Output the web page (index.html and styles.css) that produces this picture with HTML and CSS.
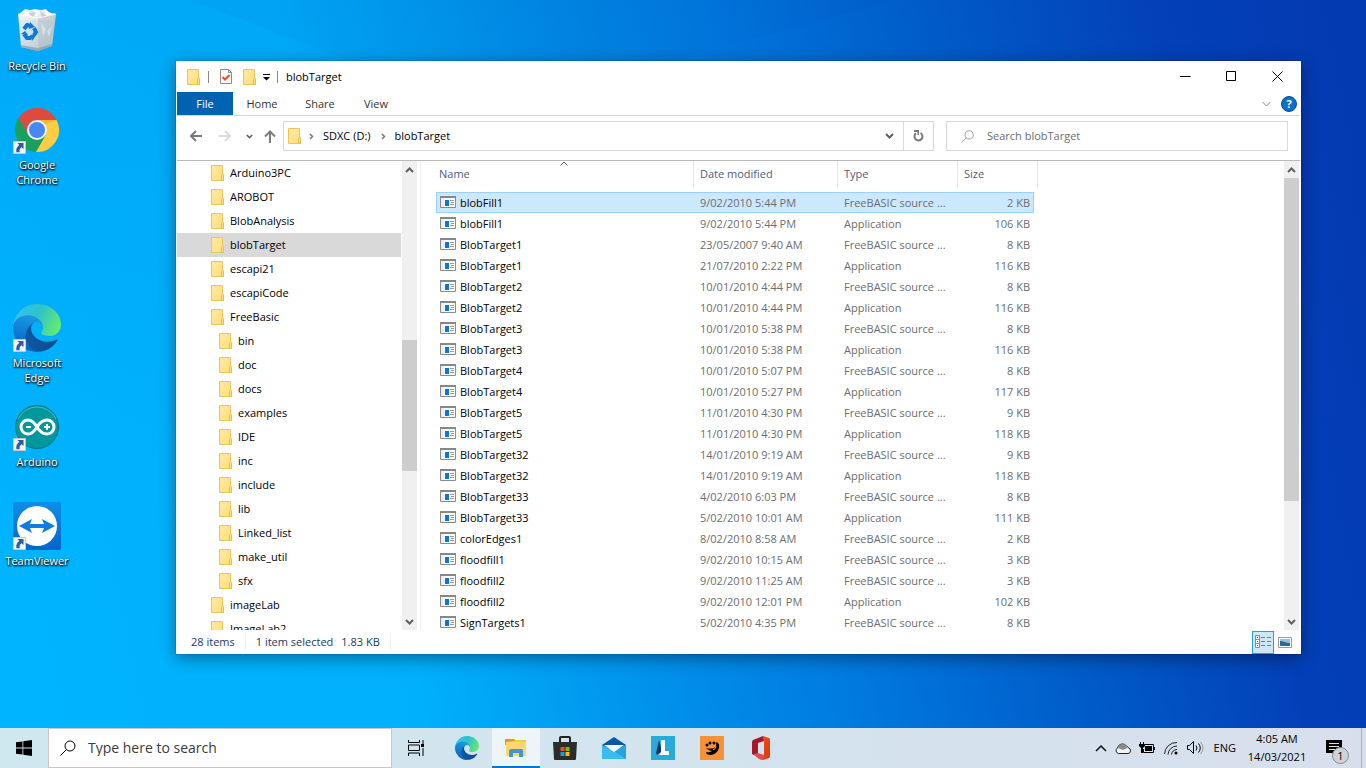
FILE: index.html
```html
<!DOCTYPE html>
<html lang="en">

<head>
    <meta charset="UTF-8">
    <meta name="viewport" content="width=device-width, initial-scale=1.0">
    <title>blobTarget</title>
    <link rel="stylesheet" href="styles.css">
</head>

<body>
    <!-- Shared icons -->
    <svg class="sprite" aria-hidden="true">
        <defs>
            <linearGradient id="folderFill" x1="0" y1="0" x2="1" y2="1">
                <stop offset="0" stop-color="#ffe9a2" />
                <stop offset="1" stop-color="#ffdf7e" />
            </linearGradient>
            <linearGradient id="edgeDark" x1="0" y1="0" x2="1" y2="0">
                <stop offset="0" stop-color="#0c59a4" />
                <stop offset="1" stop-color="#114a8b" />
            </linearGradient>
            <linearGradient id="edgeMid" x1="0.6" y1="0" x2="0.3" y2="1">
                <stop offset="0" stop-color="#1b9de2" />
                <stop offset="0.5" stop-color="#0f7fd8" />
                <stop offset="1" stop-color="#0b5cb0" />
            </linearGradient>
            <linearGradient id="edgeTop" x1="0" y1="0.3" x2="1" y2="0.6">
                <stop offset="0" stop-color="#35c1f1" />
                <stop offset="0.5" stop-color="#2fc3c9" />
                <stop offset="1" stop-color="#66eb6e" />
            </linearGradient>
            <linearGradient id="tvFill" x1="0" y1="0" x2="0" y2="1">
                <stop offset="0" stop-color="#0e8ee9" />
                <stop offset="1" stop-color="#0565ca" />
            </linearGradient>
            <linearGradient id="binFill" x1="0" y1="0" x2="1" y2="1">
                <stop offset="0" stop-color="#f4f6f8" />
                <stop offset="1" stop-color="#c3c8cd" />
            </linearGradient>
            <linearGradient id="officeFill" x1="0" y1="0" x2="1" y2="1">
                <stop offset="0" stop-color="#f0502a" />
                <stop offset="1" stop-color="#d93a06" />
            </linearGradient>
        </defs>
        <symbol id="folder" viewBox="0 0 14 16">
            <path d="M.5.5h11v9h1v6H.5z" fill="url(#folderFill)" stroke="#ecc757" />
            <path d="M10.5 15.5v-5l1-1 1 1v5z" fill="#ffe08a" stroke="#e6bd48" />
        </symbol>
        <symbol id="app" viewBox="0 0 16 12">
            <path d="M.5.5h15v11H.5z" fill="#eee" stroke="#8a8a8a" />
            <path d="M0 0h16v2H0z" fill="#85888b" />
            <path d="M4 2h11v9H4z" fill="#fff" />
            <path d="M5 4h4v6H5z" fill="#0a78d7" />
            <path d="M10 4.500h4M11 6.500h3M10 8.500h4" stroke="#9a9a9a" />
        </symbol>
        <symbol id="edge" viewBox="0 0 256 256">
            <g transform="translate(-4.63 -4.92)">
                <path fill="url(#edgeDark)" d="M235.680 195.460a93.730 93.730 0 01-10.540 4.710 101.870 101.870 0 01-35.900 6.460c-47.320 0-88.540-32.550-88.540-74.320A31.480 31.480 0 01117.130 105c-42.800 1.800-53.800 46.400-53.800 72.530 0 73.880 68.090 81.370 82.760 81.370 7.910 0 19.840-2.300 27-4.560l1.310-.44a128.340 128.340 0 0066.600-52.800 4 4 0 00-5.320-5.640z" />
                <path fill="url(#edgeMid)" d="M110.340 246.340A79.200 79.200 0 0187.600 225a80.720 80.720 0 0129.530-120c3.120-1.470 8.450-4.130 15.540-4a32.350 32.350 0 0125.690 13 31.880 31.880 0 016.360 18.660c0-.21 24.460-79.600-80-79.600-43.900 0-80 41.660-80 78.210a130.150 130.150 0 0012.110 56 128 128 0 00156.380 67.110 75.550 75.550 0 01-62.780-8z" />
                <path fill="url(#edgeTop)" d="M156.940 153.780c-.81 1.050-3.300 2.500-3.300 5.660 0 2.610 1.700 5.120 4.720 7.230 14.380 10 41.490 8.680 41.560 8.680a59.560 59.560 0 0030.270-8.350 61.380 61.380 0 0030.430-52.880c.26-22.410-8-37.310-11.340-43.910-21.190-41.450-66.930-65.290-116.670-65.290a128 128 0 00-128 126.200c.48-36.540 36.800-66.050 80-66.050 3.500 0 23.460.34 42 10.070 16.340 8.580 24.900 18.940 30.850 29.210 6.180 10.670 7.280 24.150 7.280 29.520s-2.740 13.330-7.800 19.910z" />
            </g>
        </symbol>
        <symbol id="shortcut" viewBox="0 0 13 13">
            <path d="M.5.5h12v12H.5z" fill="#f3f3f3" stroke="#c9c9c9" />
            <path d="M4.500 2h6v6L8.500 6.200C6.700 7.500 6.300 9 6.700 11.200H3.400C2.800 8 4 5.500 6.300 4z" fill="#2c5d9e" />
        </symbol>
        <symbol id="up" viewBox="0 0 9 6">
            <path d="M1 5l3.500-3.500L8 5" fill="none" stroke="#606060" stroke-width="2" />
        </symbol>
        <symbol id="down" viewBox="0 0 9 6">
            <path d="M1 1l3.500 3.500L8 1" fill="none" stroke="#606060" stroke-width="2" />
        </symbol>
        <symbol id="magnifier" viewBox="0 0 16 16">
            <circle cx="10" cy="6" r="5" fill="none" stroke="currentColor" />
            <path d="M6.500 9.500L.5 15.500" stroke="currentColor" />
        </symbol>
    </svg>

    <main class="desktop">
        <svg class="rays" viewBox="0 0 1366 728" preserveAspectRatio="none" aria-hidden="true">
            <path d="M190 0L480 110L900 0z" fill="#003f9e" opacity=".03" />
        </svg>

        <nav class="shortcuts" aria-label="Desktop">
            <a class="shortcut" href="#">
                <svg class="shortcut-icon" viewBox="0 0 48 48">
                    <path d="M6 7l6-5 5 1 5-1 6 1 5-1 4 5 5-1-2 7H7z" fill="#e9ecef" />
                    <path d="M12 3l5 4-6 3zM21 2l6 3-4 5zM32 3l1 6 7-2z" fill="#fff" />
                    <path d="M15 6l5 4 3-5zM27 4l2 7 5-2z" fill="#c9ced3" />
                    <path d="M5 7l20 4 18-4-4 32-14 5-17-4z" fill="url(#binFill)" opacity=".93" />
                    <path d="M25 11l18-4-4 32-14 5z" fill="#aab1b8" opacity=".35" />
                    <path d="M8 38l17 3 14-4v2l-14 5-17-4z" fill="#8b9299" opacity=".6" />
                    <path d="M5 7l20 4 18-4" fill="none" stroke="#fff" opacity=".7" />
                    <path d="M28 16l5 6-3 8zM34 24l5-5-3 11zM10 14l6 2-4 4z" fill="#fff" opacity=".4" />
                    <g fill="none" stroke="#0d79d3" stroke-width="4">
                        <path d="M11 22l3-4 4 1M21 21l2 4-2 3M18 31h-4l-3-4" />
                    </g>
                    <path d="M17 15l5 5-6 2zM24 27l-7 1 2 6zM8 27l4-3 3 4z" fill="#0d79d3" />
                </svg>
                <span class="shortcut-label">Recycle Bin</span>
            </a>
            <a class="shortcut" href="#">
                <svg class="shortcut-icon" viewBox="0 0 48 48">
                    <path d="M5.550 12.020A22 22 0 0143.600 14H24l-8.660 15z" fill="#dd4b3e" />
                    <path d="M43.600 14A22 22 0 0122.850 45.970L32.660 29 24 14z" fill="#ffcd42" />
                    <path d="M22.850 45.970A22 22 0 015.550 12.020L15.340 29h17.320z" fill="#1a9f5c" />
                    <path d="M24 14h19.600l-12 5z" fill="#d9a02b" opacity=".4" />
                    <circle cx="24" cy="24" r="10" fill="#f4f4f4" />
                    <circle cx="24" cy="24" r="8" fill="#4688f4" />
                    <use href="#shortcut" x="0" y="35" width="13" height="13" />
                </svg>
                <span class="shortcut-label">Google Chrome</span>
            </a>
            <a class="shortcut shortcut-lower" href="#">
                <svg class="shortcut-icon" viewBox="0 0 48 48">
                    <use href="#edge" width="48" height="48" />
                    <use href="#shortcut" x="0" y="35" width="13" height="13" />
                </svg>
                <span class="shortcut-label">Microsoft Edge</span>
            </a>
            <a class="shortcut" href="#">
                <svg class="shortcut-icon" viewBox="0 0 48 48">
                    <circle cx="24" cy="24" r="21.500" fill="#02979c" stroke="#0b7478" />
                    <path d="M5 16a21 21 0 0138 0" fill="none" stroke="#7fcfd0" opacity=".6" />
                    <path d="M24 24c-3-5-6-7-9-7a7 7 0 000 14c3 0 6-2 9-7s6-7 10-7a7 7 0 010 14c-4 0-7-2-10-7z" fill="none" stroke="#fff" stroke-width="3" />
                    <path d="M13 24h5M31 24h6M34 21v6" stroke="#fff" stroke-width="2" />
                    <use href="#shortcut" x="0" y="35" width="13" height="13" />
                </svg>
                <span class="shortcut-label">Arduino</span>
            </a>
            <a class="shortcut" href="#">
                <svg class="shortcut-icon" viewBox="0 0 48 48">
                    <rect width="48" height="48" rx="2" fill="url(#tvFill)" />
                    <circle cx="24" cy="24" r="20" fill="#fff" />
                    <path d="M6 24l13-7-2 5h14l-2-5 13 7-13 7 2-5H17l2 5z" fill="#0f7de0" />
                    <use href="#shortcut" x="0" y="35" width="13" height="13" />
                </svg>
                <span class="shortcut-label">TeamViewer</span>
            </a>
        </nav>

        <section class="window">
            <header class="titlebar">
                <svg class="folder"><use href="#folder" /></svg>
                <span class="bar"></span>
                <button class="quick" aria-label="Properties">
                    <svg width="12" height="15" viewBox="0 0 12 15">
                        <path d="M.5.5h8l3 3v11H.5z" fill="#f8f8f8" stroke="#8b8b8b" />
                        <path d="M8.500.5v3h3" fill="none" stroke="#8b8b8b" />
                        <path d="M2.500 8l2.500 2.500L9.500 6" fill="none" stroke="#e8501d" stroke-width="2" />
                    </svg>
                </button>
                <button class="quick" aria-label="New folder">
                    <svg class="folder"><use href="#folder" /></svg>
                </button>
                <button class="quick-menu" aria-label="Customize Quick Access Toolbar">
                    <svg width="7" height="7" viewBox="0 0 7 7">
                        <path d="M0 0h7v1H0zM0 3h7L3.500 6.500z" />
                    </svg>
                </button>
                <span class="bar"></span>
                <h1>blobTarget</h1>
                <div class="window-buttons">
                    <button aria-label="Minimize">
                        <svg width="11" height="11" viewBox="0 0 11 11"><path d="M0 5.500h10.500" stroke="#000" /></svg>
                    </button>
                    <button aria-label="Maximize">
                        <svg width="11" height="11" viewBox="0 0 11 11"><path d="M.5.5h9v9h-9z" fill="none" stroke="#000" /></svg>
                    </button>
                    <button aria-label="Close">
                        <svg width="11" height="11" viewBox="0 0 11 11"><path d="M.5.5l10 10M10.500.5l-10 10" stroke="#000" /></svg>
                    </button>
                </div>
            </header>

            <div class="ribbon">
                <button class="tab tab-file">File</button>
                <button class="tab">Home</button>
                <button class="tab">Share</button>
                <button class="tab">View</button>
                <div class="ribbon-end">
                    <button aria-label="Expand the Ribbon">
                        <svg width="9" height="6" viewBox="0 0 9 6"><path d="M.5 1l4 4 4-4" fill="none" stroke="#8a8a8a" /></svg>
                    </button>
                    <button class="help" aria-label="Help">?</button>
                </div>
            </div>

            <div class="navbar">
                <button class="nav-back" aria-label="Back">
                    <svg width="12" height="12" viewBox="0 0 12 12"><path d="M6 1L1 6l5 5M1 6h11" fill="none" stroke="#7b7b7b" stroke-width="2" /></svg>
                </button>
                <button class="nav-forward" aria-label="Forward">
                    <svg width="12" height="12" viewBox="0 0 12 12"><path d="M6 1l5 5-5 5M11 6H0" fill="none" stroke="#dcdcdc" stroke-width="2" /></svg>
                </button>
                <button class="nav-recent" aria-label="Recent locations">
                    <svg width="7" height="5"><use href="#down" /></svg>
                </button>
                <button class="nav-up" aria-label="Up">
                    <svg width="12" height="13" viewBox="0 0 12 13"><path d="M1 6.500l5-5 5 5M6 1.500V13" fill="none" stroke="#7b7b7b" stroke-width="2" /></svg>
                </button>
                <div class="address">
                    <svg class="folder"><use href="#folder" /></svg>
                    <svg class="crumb-arrow" viewBox="0 0 5 7"><path d="M1 1l2.500 2.500L1 6" fill="none" stroke="#777" stroke-width="1.500" /></svg>
                    <a class="crumb" href="#">SDXC (D:)</a>
                    <svg class="crumb-arrow" viewBox="0 0 5 7"><path d="M1 1l2.500 2.500L1 6" fill="none" stroke="#777" stroke-width="1.500" /></svg>
                    <a class="crumb" href="#">blobTarget</a>
                    <button class="address-drop" aria-label="Previous locations">
                        <svg width="9" height="6"><use href="#down" /></svg>
                    </button>
                    <button class="refresh" aria-label="Refresh">
                        <svg width="11" height="12" viewBox="0 0 11 12">
                            <path d="M7.500 3a4 4 0 11-4.500.3" fill="none" stroke="#777" stroke-width="2" />
                            <path d="M1 0h5v5H4.500V2H1z" fill="#777" />
                        </svg>
                    </button>
                </div>
                <label class="search">
                    <svg width="13" height="13"><use href="#magnifier" /></svg>
                    <input type="search" placeholder="Search blobTarget" aria-label="Search blobTarget">
                </label>
            </div>

            <div class="content">
                <ul class="tree" id="tree"></ul>
                <div class="scrollbar tree-scroll">
                    <svg width="9" height="6"><use href="#up" /></svg>
                    <div class="track"><div class="thumb"></div></div>
                    <svg width="9" height="6"><use href="#down" /></svg>
                </div>

                <div class="files">
                    <table>
                        <colgroup>
                            <col class="col-name">
                            <col class="col-date">
                            <col class="col-type">
                            <col class="col-size">
                            <col class="col-end">
                        </colgroup>
                        <thead>
                            <tr>
                                <th><span>Name</span><svg class="sort" viewBox="0 0 8 5"><path d="M.5 4.500L4 1l3.500 3.500" fill="none" stroke="#5a5a5a" /></svg></th>
                                <th><span>Date modified</span></th>
                                <th><span>Type</span></th>
                                <th colspan="2"><span>Size</span></th>
                            </tr>
                        </thead>
                        <tbody id="fileRows"></tbody>
                    </table>
                </div>
                <div class="scrollbar file-scroll">
                    <svg width="9" height="6"><use href="#up" /></svg>
                    <div class="track"><div class="thumb"></div></div>
                    <svg width="9" height="6"><use href="#down" /></svg>
                </div>
            </div>

            <footer class="status">
                <span class="status-count">28 items</span>
                <span>1 item selected</span>
                <span class="status-size">1.83 KB</span>
                <div class="views">
                    <button class="view view-on" aria-label="Details">
                        <svg width="16" height="14" viewBox="0 0 16 14">
                            <path d="M.5.5h4v12h-4zM.5 4.500h4M.5 8.500h4" fill="#fff" stroke="#8c8c8c" />
                            <path d="M2 2h1v1H2zM2 6h1v1H2z" fill="#555" />
                            <path d="M2 10h1v1H2z" fill="#d22" />
                            <path d="M6 2.500h4M12 2.500h4M6 6.500h4M12 6.500h4M6 10.500h4M12 10.500h4" stroke="#7a7a7a" />
                        </svg>
                    </button>
                    <button class="view" aria-label="Large icons">
                        <svg width="14" height="11" viewBox="0 0 14 11">
                            <path d="M.5.5h13v10H.5z" fill="#fff" stroke="#9a9a9a" />
                            <path d="M2 2h10v7H2z" fill="#8fc1f2" />
                            <path d="M2 4c3 0 6 2 10 2v1H2z" fill="#2c6e63" />
                            <path d="M2 7h10v2H2z" fill="#2a66c0" />
                        </svg>
                    </button>
                </div>
            </footer>
        </section>
    </main>

    <footer class="taskbar">
        <button class="start" aria-label="Start">
            <svg width="16" height="16" viewBox="0 0 16 16">
                <path d="M0 2.300L6.500 1.400v6.200H0zM7.300 1.300L16 0v7.600H7.300zM0 8.400h6.500v6.200L0 13.700zM7.300 8.400H16V16l-8.700-1.300z" />
            </svg>
        </button>
        <label class="task-search">
            <svg width="16" height="16"><use href="#magnifier" /></svg>
            <input type="search" placeholder="Type here to search" aria-label="Type here to search">
        </label>
        <button class="task-view" aria-label="Task View">
            <svg width="16" height="16" viewBox="0 0 16 16">
                <path d="M.5 0v2.500h11V0M.5 16v-3h11v3M.5 5h11v5.500H.5zM15 0v4M15 8v8" fill="none" stroke="#000" />
                <path d="M13 4h3v3h-3z" />
            </svg>
        </button>
        <button class="task" aria-label="Microsoft Edge">
            <svg width="24" height="24"><use href="#edge" /></svg>
        </button>
        <button class="task task-active" aria-label="File Explorer">
            <svg width="22" height="20" viewBox="0 0 22 20">
                <path d="M0 1h9l2 2v4H0z" fill="#dc9f11" />
                <path d="M1 4l10-1V2h10v16H1z" fill="#ffd869" />
                <path d="M11 2h10v2H10z" fill="#f7c948" />
                <path d="M4 19v-7l2-1h11l1 1v7h-4v-4H8v4z" fill="#3e96da" />
            </svg>
        </button>
        <button class="task" aria-label="Microsoft Store">
            <svg width="24" height="24" viewBox="0 0 24 24">
                <path d="M7 7V2q0-1 1-1h8q1 0 1 1v5" fill="none" stroke="#222" stroke-width="2" />
                <path d="M0 6h24l-1 17q0 1-1 1H2q-1 0-1-1z" fill="#2d2c2b" />
                <path d="M7.500 11h4v4h-4z" fill="#f25022" />
                <path d="M12.500 11h4v4h-4z" fill="#7fba00" />
                <path d="M7.500 16h4v4h-4z" fill="#00a4ef" />
                <path d="M12.500 16h4v4h-4z" fill="#ffb900" />
            </svg>
        </button>
        <button class="task" aria-label="Mail">
            <svg width="24" height="24" viewBox="0 0 24 24">
                <path d="M0 9l12-8 12 8v4H0z" fill="#0358a7" />
                <path d="M0 9l12 6 12-6v14H0z" fill="#38bdf0" />
                <path d="M24 9v14L12 15z" fill="#20a4ea" />
                <path d="M2 9h20l-10 7z" fill="#f7f7f7" />
            </svg>
        </button>
        <button class="task" aria-label="L">
            <svg width="24" height="24" viewBox="0 0 24 24">
                <path d="M0 0h24v24H0z" fill="#27acd9" />
                <path d="M8 4L5 17l1 2 5-4z" fill="#0b3560" />
                <path d="M10 4h4v11h4v4H7q3-1 3-4z" fill="#fff" />
            </svg>
        </button>
        <button class="task" aria-label="Paint">
            <svg width="24" height="24" viewBox="0 0 24 24">
                <path d="M0 0h24v24H0z" fill="#f59235" />
                <circle cx="7" cy="9" r="1.500" />
                <circle cx="10" cy="7" r="1.500" />
                <circle cx="14" cy="7" r="1.500" />
                <path d="M16 6q4 1 3 6-2 6-8 7-5 0-5-3 3 1 6-1-3 0-6-3 4 1 8 0 3-1 2-6z" />
                <path d="M13 14q3-1 3-4" fill="none" stroke="#f59235" />
            </svg>
        </button>
        <button class="task" aria-label="Office">
            <svg width="20" height="24" viewBox="0 0 20 24">
                <path d="M12 0l6 2q1 0 1 2v16q0 2-1 2l-6 2-5-3 6-1V5z" fill="url(#officeFill)" />
                <path d="M12 0l1 5-6 2v10l-4 2-2-1V6q0-1 1-2z" fill="#a5172a" />
                <path d="M3 19l4-2 6 2v4l-1 1q-2 0-4-1z" fill="#e8474e" />
            </svg>
        </button>

        <div class="tray">
            <button aria-label="Show hidden icons">
                <svg width="12" height="8" viewBox="0 0 12 8"><path d="M1 7l5-5 5 5" fill="none" stroke="#111" stroke-width="1.500" /></svg>
            </button>
            <button aria-label="OneDrive">
                <svg width="16" height="12" viewBox="0 0 16 12">
                    <path d="M3.500 11.500a3 3 0 01-1-5.500A5 5 0 0111.500 4a3.500 3.500 0 012 2 2.800 2.800 0 01-.5 5.500z" fill="#f2f2f2" stroke="#222" />
                    <path d="M3 6a4.500 4.500 0 018.500-1.500L12 6 8 8z" fill="#8a8a8a" />
                </svg>
            </button>
            <button aria-label="Battery">
                <svg width="16" height="12" viewBox="0 0 16 12">
                    <path d="M5 2.500h9.500v8H4.500V7M15.500 5v3M1.500 0v2M4.500 0v2" fill="none" stroke="#000" />
                    <path d="M0 2h6v2L4 6v5H2V6L0 4zM6 4h7v5H6z" />
                </svg>
            </button>
            <button aria-label="Network">
                <svg width="16" height="14" viewBox="-1 0 16 14">
                    <path d="M.5 13A12 12 0 0113 1.500M4 13.500A9 9 0 0113 5M7.500 13.500A6 6 0 0113 8.500" fill="none" stroke="#222" />
                    <circle cx="12" cy="12" r="1.500" />
                </svg>
            </button>
            <button aria-label="Volume">
                <svg width="17" height="14" viewBox="0 0 17 14">
                    <path d="M.5 4.500h2l4-4v12l-4-4h-2z" fill="none" stroke="#000" />
                    <path d="M9 4.500q2 2.500 0 5M11.500 2.500q3.500 4.500 0 9" fill="none" stroke="#000" />
                    <path d="M13.500 1q5 6 0 12" fill="none" stroke="#9a9a9a" />
                </svg>
            </button>
            <button class="language">ENG</button>
            <button class="clock"><span>4:05 AM</span><span>14/03/2021</span></button>
            <button class="notifications" aria-label="Notifications, 1 new">
                <svg width="24" height="24" viewBox="0 0 24 24">
                    <path d="M0 0h16v13H9v3l-3-3H0z" />
                    <path d="M3 3.500h10M3 6.500h10M3 9.500h7" stroke="#d8dfec" />
                </svg>
                <span class="badge">1</span>
            </button>
            <button class="show-desktop" aria-label="Show desktop"></button>
        </div>
    </footer>

    <script>
        const tree = document.getElementById('tree');
        const fileRows = document.getElementById('fileRows');

        const currentFolder = 'blobTarget';
        const folders = [
            'Arduino3PC', 'AROBOT', 'BlobAnalysis', 'blobTarget', 'escapi21', 'escapiCode',
            {
                name: 'FreeBasic',
                children: ['bin', 'doc', 'docs', 'examples', 'IDE', 'inc', 'include', 'lib', 'Linked_list', 'make_util', 'sfx']
            },
            'imageLab', 'ImageLab2'
        ];

        const source = 'FreeBASIC source ...';
        const app = 'Application';
        const files = [
            ['blobFill1', '9/02/2010 5:44 PM', source, '2 KB'],
            ['blobFill1', '9/02/2010 5:44 PM', app, '106 KB'],
            ['BlobTarget1', '23/05/2007 9:40 AM', source, '8 KB'],
            ['BlobTarget1', '21/07/2010 2:22 PM', app, '116 KB'],
            ['BlobTarget2', '10/01/2010 4:44 PM', source, '8 KB'],
            ['BlobTarget2', '10/01/2010 4:44 PM', app, '116 KB'],
            ['BlobTarget3', '10/01/2010 5:38 PM', source, '8 KB'],
            ['BlobTarget3', '10/01/2010 5:38 PM', app, '116 KB'],
            ['BlobTarget4', '10/01/2010 5:07 PM', source, '8 KB'],
            ['BlobTarget4', '10/01/2010 5:27 PM', app, '117 KB'],
            ['BlobTarget5', '11/01/2010 4:30 PM', source, '9 KB'],
            ['BlobTarget5', '11/01/2010 4:30 PM', app, '118 KB'],
            ['BlobTarget32', '14/01/2010 9:19 AM', source, '9 KB'],
            ['BlobTarget32', '14/01/2010 9:19 AM', app, '118 KB'],
            ['BlobTarget33', '4/02/2010 6:03 PM', source, '8 KB'],
            ['BlobTarget33', '5/02/2010 10:01 AM', app, '111 KB'],
            ['colorEdges1', '8/02/2010 8:58 AM', source, '2 KB'],
            ['floodfill1', '9/02/2010 10:15 AM', source, '3 KB'],
            ['floodfill2', '9/02/2010 11:25 AM', source, '3 KB'],
            ['floodfill2', '9/02/2010 12:01 PM', app, '102 KB'],
            ['SignTargets1', '5/02/2010 4:35 PM', source, '8 KB']
        ];

        function folderItem(folder) {
            const name = folder.name || folder;
            const children = folder.children ? `<ul>${folder.children.map(folderItem).join('')}</ul>` : '';
            const current = name === currentFolder ? ' class="current"' : '';
            return `<li><a${current} href="#"><svg class="folder"><use href="#folder" /></svg>${name}</a>${children}</li>`;
        }

        function fileRow([name, date, type, size], index) {
            const selected = index === 0 ? ' class="selected"' : '';
            return `<tr${selected}><td><svg class="app"><use href="#app" /></svg>${name}</td><td>${date}</td><td>${type}</td><td>${size}</td></tr>`;
        }

        tree.innerHTML = folders.map(folderItem).join('');
        fileRows.innerHTML = files.map(fileRow).join('');
    </script>
</body>

</html>
```
FILE: styles.css
```css
:root {
    /* Colors */
    --accent: #0063b1;
    --text: #000000;
    --text-muted: #6d6d6d;
    --text-header: #4c607a;
    --text-status: #1e395b;
    --line: #d9d9d9;
    --selected: #cce8ff;
    --selected-border: #99d1ff;
    --scroll-track: #f0f0f0;
    --scroll-thumb: #cdcdcd;

    /* Sizes */
    --taskbar-height: 40px;
    --scrollbar-width: 15px;
    --font-size: 11px;
    --font-size-search: 14px;
}

* {
    box-sizing: border-box;
}

body {
    margin: 0;
    height: 100vh;
    display: flex;
    flex-direction: column;
    overflow: hidden;
    font-family: "Open Sans", "Noto Sans", sans-serif;
    font-size: var(--font-size);
    line-height: 16px;
    color: var(--text);
}

button {
    display: flex;
    align-items: center;
    justify-content: center;
    margin: 0;
    padding: 0;
    border: 0;
    background: none;
    font: inherit;
    color: inherit;
}

a {
    color: inherit;
    text-decoration: none;
}

input {
    flex: 1;
    min-width: 0;
    padding: 0;
    border: 0;
    outline: none;
    background: none;
    font: inherit;
}

svg {
    flex: none;
    display: block;
}

.sprite {
    position: absolute;
    width: 0;
    height: 0;
}

/* Desktop */
.desktop {
    position: relative;
    flex: 1;
    min-height: 0;
    background:
        linear-gradient(180deg, rgba(0, 70, 180, 0.08), transparent 75%),
        linear-gradient(78deg, #00b4ff 0%, #00b0fb 28%, #008de9 46%, #0079de 57%, #005fcb 70%, #0340b8 86%, #0338b0 100%);
}

.rays {
    position: absolute;
    inset: 0;
    width: 100%;
    height: 100%;
}

.shortcuts {
    position: relative;
    display: flex;
    flex-direction: column;
    width: 74px;
}

.shortcut {
    display: flex;
    flex-direction: column;
    align-items: center;
    gap: 3px;
    height: 99px;
    padding-top: 7px;
}

/* leaves one free slot above */
.shortcut-lower {
    margin-top: 99px;
}

.shortcut-icon {
    width: 48px;
    height: 48px;
}

.shortcut-label {
    line-height: 15px;
    max-width: 72px;
    text-align: center;
    color: #fff;
    text-shadow: 1px 1px 2px #000, 0 1px 2px #000;
}

/* Window */
.window {
    position: absolute;
    top: 61px;
    right: 65px;
    bottom: 74px;
    left: 176px;
    display: flex;
    flex-direction: column;
    padding: 0 1px;
    background: #fff;
    box-shadow: 0 0 1px rgba(0, 0, 0, 0.5), 0 4px 16px rgba(0, 0, 0, 0.4);
}

.folder {
    width: 14px;
    height: 16px;
}

.titlebar {
    display: flex;
    align-items: center;
    height: 31px;
    padding-left: 10px;
}

.titlebar h1 {
    margin: 0 0 0 8px;
    font-size: var(--font-size);
    font-weight: normal;
}

.bar {
    width: 1px;
    height: 12px;
    margin-left: 7px;
    background: #8a8a8a;
}

.quick {
    margin-left: 11px;
}

.quick-menu {
    margin: 2px 0 0 6px;
}

.window-buttons {
    display: flex;
    align-self: stretch;
    margin-left: auto;
}

.window-buttons button {
    width: 46px;
}

.ribbon {
    display: flex;
    height: 24px;
    border-bottom: 1px solid var(--line);
}

.tab {
    width: 58px;
    color: #333;
}

.tab:nth-child(4) {
    width: 54px;
}

.tab-file {
    width: 56px;
    background: var(--accent);
    color: #fff;
}

.ribbon-end {
    display: flex;
    align-items: center;
    gap: 10px;
    margin-left: auto;
    padding-right: 3px;
}

.help {
    width: 16px;
    height: 16px;
    border: 1px solid #0a4e8c;
    border-radius: 50%;
    background: #0b6fcd;
    color: #fff;
    font-weight: bold;
    line-height: 14px;
}

.navbar {
    display: flex;
    align-items: flex-start;
    height: 45px;
    padding: 5px 12px 0 13px;
    border-bottom: 1px solid #b9b9b9;
}

.navbar > button {
    height: 30px;
}

.nav-forward {
    margin-left: 17px;
}

.nav-recent {
    margin-left: 15px;
}

.nav-up {
    margin-left: 11px;
}

.address {
    display: flex;
    align-items: center;
    flex: 1;
    height: 30px;
    margin-left: 7px;
    padding-left: 4px;
    border: 1px solid var(--line);
}

.crumb {
    padding-right: 3px;
}

.crumb-arrow {
    width: 5px;
    height: 7px;
    margin: 0 9px 0 7px;
}

.address-drop {
    width: 28px;
    height: 28px;
    margin-left: auto;
}

.refresh {
    width: 30px;
    height: 28px;
    border-left: 1px solid var(--line);
}

.search {
    display: flex;
    align-items: center;
    width: 342px;
    height: 30px;
    margin-left: 12px;
    padding: 0 14px;
    gap: 13px;
    border: 1px solid var(--line);
    color: #8f8f8f;
}

.search input::placeholder {
    color: var(--text-muted);
}

.content {
    flex: 1;
    display: flex;
    min-height: 0;
}

/* Folder tree */
.tree {
    width: 224px;
    overflow: hidden;
}

.tree,
.tree ul {
    margin: 0;
    padding: 0;
    list-style: none;
}

.tree a {
    display: flex;
    align-items: center;
    gap: 5px;
    height: 24px;
    padding-left: 34px;
}

.tree ul a {
    padding-left: 42px;
}

.tree .current {
    background: #d9d9d9;
}

/* Scrollbars */
.scrollbar {
    display: flex;
    flex-direction: column;
    align-items: center;
    flex: none;
    width: var(--scrollbar-width);
    padding: 6px 0 5px;
    background: var(--scroll-track);
}

.track {
    flex: 1;
    align-self: stretch;
    margin: 5px 0;
}

.thumb {
    background: var(--scroll-thumb);
}

.tree-scroll {
    margin: 0 3px 0 1px;
}

.tree-scroll .thumb {
    height: 30%;
    margin-top: 162px;
}

.file-scroll {
    margin-right: 1px;
}

.file-scroll .thumb {
    height: 74%;
}

/* File list */
.files {
    flex: 1;
    min-width: 0;
    overflow: hidden;
    padding-left: 15px;
    border-left: 1px solid #f0f0f0;
}

table {
    width: 602px;
    table-layout: fixed;
    border-collapse: separate;
    border-spacing: 0;
}

.col-name {
    width: 258px;
}

.col-date {
    width: 144px;
}

.col-type {
    width: 120px;
}

.col-size {
    width: 76px;
}

.col-end {
    width: 4px;
}

th {
    position: relative;
    height: 31px;
    padding: 0 0 5px;
    text-align: left;
    font-weight: normal;
    color: var(--text-header);
}

th span {
    display: block;
    padding-left: 6px;
    line-height: 26px;
    border-right: 1px solid #e5e5e5;
}

th:first-child span {
    padding-left: 3px;
}

.sort {
    position: absolute;
    top: 0;
    left: 50%;
    width: 8px;
    height: 5px;
    margin-left: -5px;
}

td {
    height: 21px;
    padding: 0 0 0 6px;
    line-height: 19px;
    white-space: nowrap;
    color: var(--text-muted);
    border: 1px solid transparent;
    border-width: 1px 0;
}

td:first-child {
    padding-left: 4px;
    color: var(--text);
}

td:last-child {
    padding: 0 4px 0 0;
    text-align: right;
}

.app {
    display: inline-block;
    width: 16px;
    height: 12px;
    margin-right: 4px;
    vertical-align: -1px;
}

.selected td {
    background: var(--selected);
    border-color: var(--selected-border);
}

.selected td:first-child {
    box-shadow: inset 1px 0 var(--selected-border);
}

.selected td:last-child {
    box-shadow: inset -1px 0 var(--selected-border);
}

/* Status bar */
.status {
    display: flex;
    align-items: center;
    height: 24px;
    padding: 0 4px 0 14px;
    color: var(--text-status);
}

.status-count {
    margin-right: 10px;
    padding-right: 10px;
    border-right: 1px solid #f0f0f0;
}

.status-size {
    margin-left: 8px;
    padding-right: 10px;
    border-right: 1px solid #f0f0f0;
}

.views {
    display: flex;
    margin-left: auto;
}

.view {
    width: 22px;
    height: 23px;
}

.view-on {
    border: 1px solid #26a0da;
    background: #cbe8f6;
}

/* Taskbar */
.taskbar {
    display: flex;
    height: var(--taskbar-height);
    background: linear-gradient(90deg, #cfe7ee, #d3e4ee 50%, #d8dfec);
}

.start {
    width: 48px;
}

.task-search {
    display: flex;
    align-items: center;
    gap: 12px;
    width: 344px;
    padding: 0 11px;
    border: 1px solid #c8c8c8;
    background: #fff;
    font-size: var(--font-size-search);
}

.task-search input::placeholder {
    color: #3b3b3b;
}

.task-view {
    width: 48px;
    margin-right: 2px;
}

.task {
    width: 48px;
    margin-left: 1px;
    border-top: 2px solid transparent;
    border-bottom: 2px solid transparent;
}

.task-active {
    border-top-color: #eef5f9;
    border-bottom-color: #0078d7;
    background: #eef5f9;
}

.tray {
    display: flex;
    align-items: stretch;
    margin-left: auto;
}

.tray button {
    padding: 0 4px;
}

.tray .language {
    padding-left: 6px;
}

.tray .clock {
    flex-direction: column;
    width: 74px;
    padding: 0;
    line-height: 18px;
}

.tray .notifications {
    position: relative;
    width: 47px;
    padding-top: 8px;
}

.badge {
    position: absolute;
    right: 12px;
    bottom: 4px;
    width: 17px;
    height: 17px;
    border: 1px solid #8a8a8a;
    border-radius: 50%;
    background: #cfd2d8;
    line-height: 15px;
}

.tray .show-desktop {
    width: 5px;
    padding: 0;
    border-left: 1px solid #a9b1bf;
}
```
